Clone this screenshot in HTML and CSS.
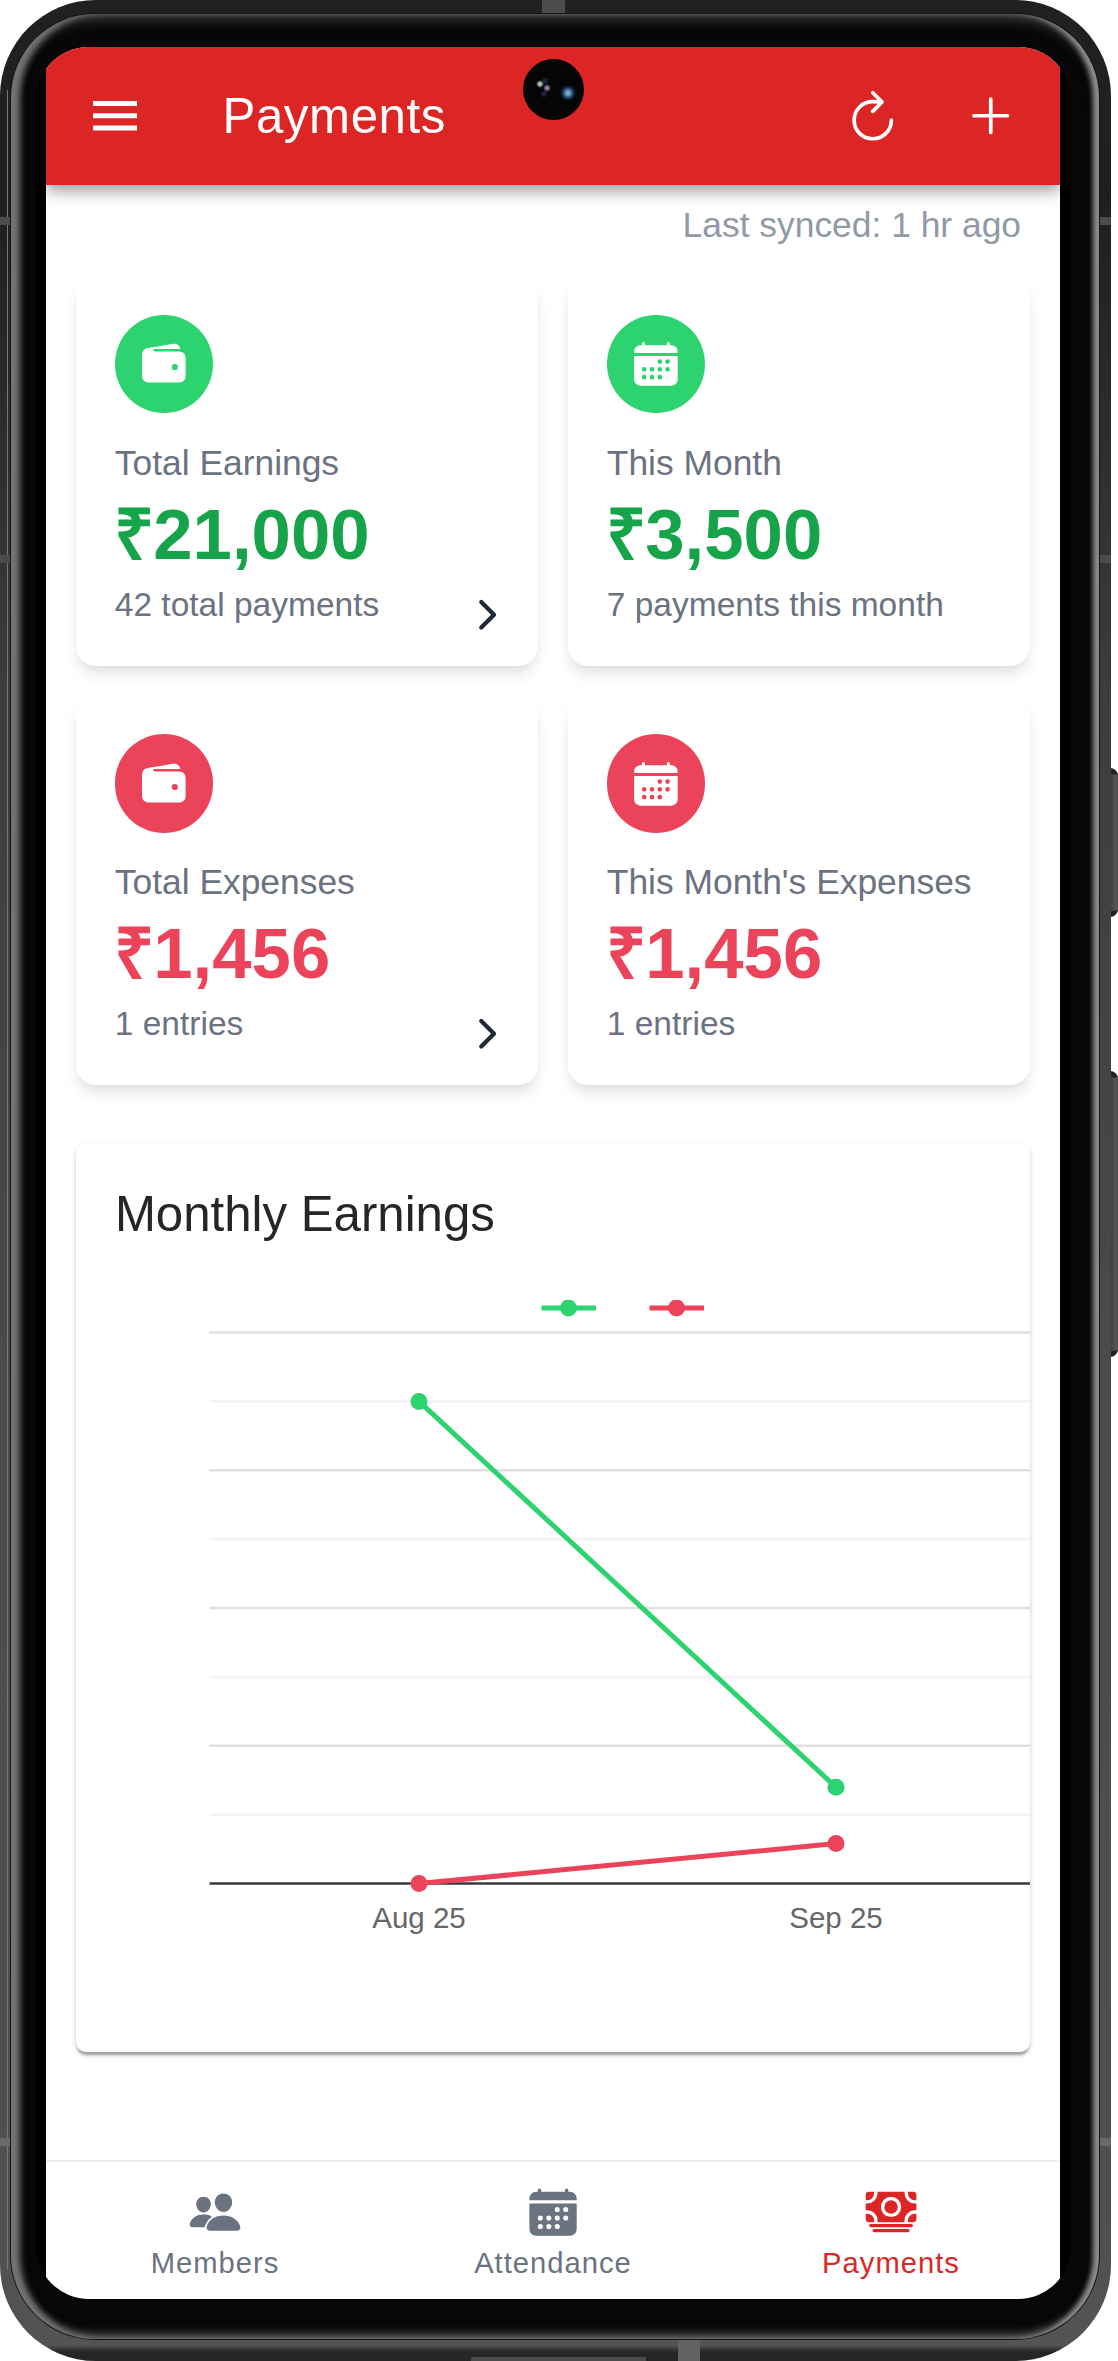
FILE: index.html
```html
<!DOCTYPE html>
<html lang="en">
<head>
<meta charset="utf-8">
<title>Payments</title>
<link rel="stylesheet" href="styles.css">
</head>
<body>
<svg class="sprite" aria-hidden="true">
  <symbol id="wallet" viewBox="0 0 512 512">
    <path d="M95.5 104h320a87.73 87.73 0 0111.18.71 66 66 0 00-77.51-55.56L86 94.08h-.3a66 66 0 00-41.07 26.13A87.57 87.57 0 0195.5 104zM415.5 128h-320a64.07 64.07 0 00-64 64v192a64.07 64.07 0 0064 64h320a64.07 64.07 0 0064-64V192a64.07 64.07 0 00-64-64zM368 320a32 32 0 1132-32 32 32 0 01-32 32z"/>
    <path d="M32 259.5V160c0-21.67 12-58 53.65-65.87C121 87.5 156 87.5 156 87.5s23 16 4 16-18.5 24.5 0 24.5 0 23.5 0 23.5L85.5 236z"/>
  </symbol>
  <symbol id="calendar" viewBox="0 0 512 512">
    <path d="M480 128a64 64 0 00-64-64h-16V48.45c0-8.61-6.62-16-15.23-16.43A16 16 0 00368 48v16H144V48.45c0-8.61-6.62-16-15.23-16.43A16 16 0 00112 48v16H96a64 64 0 00-64 64v12a4 4 0 004 4h440a4 4 0 004-4zM32 416a64 64 0 0064 64h320a64 64 0 0064-64V179a3 3 0 00-3-3H35a3 3 0 00-3 3zm344-208a24 24 0 11-24 24 24 24 0 0124-24zm0 80a24 24 0 11-24 24 24 24 0 0124-24zm-80-80a24 24 0 11-24 24 24 24 0 0124-24zm0 80a24 24 0 11-24 24 24 24 0 0124-24zm0 80a24 24 0 11-24 24 24 24 0 0124-24zm-80-80a24 24 0 11-24 24 24 24 0 0124-24zm0 80a24 24 0 11-24 24 24 24 0 0124-24zm-80-80a24 24 0 11-24 24 24 24 0 0124-24zm0 80a24 24 0 11-24 24 24 24 0 0124-24z"/>
  </symbol>
  <symbol id="people" viewBox="0 0 512 512">
    <path d="M336 256c-20.56 0-40.44-9.18-56-25.84-15.13-16.25-24.37-37.92-26-61-1.74-24.62 5.77-47.26 21.14-63.76S312 80 336 80c23.83 0 45.38 9.06 60.7 25.52 15.47 16.62 23 39.22 21.26 63.63-1.67 23.11-10.9 44.77-26 61C376.44 246.82 356.57 256 336 256zM467.83 432H204.18a27.71 27.71 0 01-22-10.67 30.22 30.22 0 01-5.26-25.79c8.42-33.81 29.28-61.85 60.32-81.08C264.79 297.4 299.86 288 336 288c36.85 0 71 9 98.71 26.05 31.11 19.13 52 47.33 60.38 81.55a30.27 30.27 0 01-5.32 25.78A27.68 27.68 0 01467.83 432zM147 260c-35.19 0-66.13-32.72-69-72.93-1.42-20.6 5-39.65 18-53.62 12.86-13.83 31-21.45 51-21.45s38 7.66 50.93 21.57c13.1 14.08 19.5 33.09 18 53.52-2.87 40.2-33.8 72.91-68.93 72.91zM212.66 291.45c-17.59-8.6-40.42-12.9-65.65-12.9-29.46 0-58.07 7.68-80.57 21.62-25.51 15.83-42.67 38.88-49.6 66.71a27.39 27.39 0 004.79 23.36A25.32 25.32 0 0041.72 400h111a8 8 0 007.87-6.57c.11-.63.25-1.26.41-1.88 8.48-34.06 28.35-62.84 57.71-83.82a8 8 0 00-.63-13.39c-1.57-.92-3.37-1.89-5.42-2.89z"/>
  </symbol>
  <symbol id="cash" viewBox="0 0 512 512">
    <path d="M448 400H64a16 16 0 010-32h384a16 16 0 010 32zM416 448H96a16 16 0 010-32h320a16 16 0 010 32zM32 272H16v48a32 32 0 0032 32h48v-16a64.07 64.07 0 00-64-64z"/>
    <path d="M480 240h16v-64h-16a96.11 96.11 0 01-96-96V64H128v16a96.11 96.11 0 01-96 96H16v64h16a96.11 96.11 0 0196 96v16h256v-16a96.11 96.11 0 0196-96zM256 304a96 96 0 1196-96 96.11 96.11 0 01-96 96z"/>
    <circle cx="256" cy="208" r="64"/>
    <path d="M416 336v16h48a32 32 0 0032-32v-48h-16a64.07 64.07 0 00-64 64zM480 144h16V96a32 32 0 00-32-32h-48v16a64.07 64.07 0 0064 64zM96 80V64H48a32 32 0 00-32 32v48h16a64.07 64.07 0 0064-64z"/>
  </symbol>
  <symbol id="chevron" viewBox="0 0 512 512">
    <path fill="none" stroke="currentColor" stroke-linecap="round" stroke-linejoin="round" stroke-width="48" d="M184 112l144 144-144 144"/>
  </symbol>
</svg>

<div class="phone">
  <span class="side-button power"></span>
  <span class="side-button volume"></span>
  <div class="body">
    <span class="antenna antenna-top"></span>
    <span class="antenna antenna-bottom"></span>
    <span class="port"></span>
    <span class="antenna side left a1"></span>
    <span class="antenna side left a2"></span>
    <span class="antenna side left a3"></span>
    <span class="antenna side right a1"></span>
    <span class="antenna side right a2"></span>
    <span class="antenna side right a3"></span>
    <div class="bezel">
      <div class="screen">
        <main class="app">
          <header class="toolbar">
            <svg class="menu" viewBox="0 0 18 12"><path fill="currentColor" d="M0 0h18v2H0zM0 5h18v2H0zM0 10h18v2H0z"/></svg>
            <h1 class="title">Payments</h1>
            <div class="actions">
              <svg class="action" viewBox="0 0 512 512"><path d="M320 146s24.360-12-64-12a160 160 0 10160 160M256 58l80 80-80 80"/></svg>
              <svg class="action" viewBox="0 0 512 512"><path d="M256 112v288M400 256H112"/></svg>
            </div>
          </header>

          <div class="content">
            <p class="synced">Last synced: 1 hr ago</p>

            <section class="stats">
              <article class="card">
                <span class="badge green"><svg><use href="#wallet"/></svg></span>
                <p class="label">Total Earnings</p>
                <p class="amount earned"><span class="currency">₹</span>21,000</p>
                <div class="foot"><p class="sub">42 total payments</p><svg class="chevron"><use href="#chevron"/></svg></div>
              </article>
              <article class="card">
                <span class="badge green"><svg><use href="#calendar"/></svg></span>
                <p class="label">This Month</p>
                <p class="amount earned"><span class="currency">₹</span>3,500</p>
                <div class="foot"><p class="sub">7 payments this month</p></div>
              </article>
              <article class="card">
                <span class="badge red"><svg><use href="#wallet"/></svg></span>
                <p class="label">Total Expenses</p>
                <p class="amount spent"><span class="currency">₹</span>1,456</p>
                <div class="foot"><p class="sub">1 entries</p><svg class="chevron"><use href="#chevron"/></svg></div>
              </article>
              <article class="card">
                <span class="badge red"><svg><use href="#calendar"/></svg></span>
                <p class="label">This Month's Expenses</p>
                <p class="amount spent"><span class="currency">₹</span>1,456</p>
                <div class="foot"><p class="sub">1 entries</p></div>
              </article>
            </section>

            <section class="chart-card">
              <h2 class="chart-title">Monthly Earnings</h2>
              <svg class="chart" viewBox="0 0 954.500 750">
                <g class="major">
                  <path d="M133.500 32.500H955M133.500 170.300H955M133.500 308H955M133.500 445.800H955"/>
                </g>
                <g class="minor">
                  <path d="M133.500 101.400H955M133.500 239.200H955M133.500 376.900H955M133.500 514.700H955"/>
                </g>
                <path class="axis" d="M133.500 583.600H955"/>
                <g class="series green-series">
                  <path d="M465.500 8h54.500M343 101.400L760 487.200"/>
                  <circle cx="492.500" cy="8" r="8.500"/><circle cx="343" cy="101.400" r="8.500"/><circle cx="760" cy="487.200" r="8.500"/>
                </g>
                <g class="series red-series">
                  <path d="M573.500 8h54.500M343 583.600L760 543.600"/>
                  <circle cx="600.500" cy="8" r="8.500"/><circle cx="343" cy="583.600" r="8.500"/><circle cx="760" cy="543.600" r="8.500"/>
                </g>
                <text x="343" y="627.500">Aug 25</text>
                <text x="760" y="627.500">Sep 25</text>
              </svg>
            </section>
          </div>

          <nav class="tabs">
            <a class="tab"><svg><use href="#people"/></svg><span>Members</span></a>
            <a class="tab"><svg><use href="#calendar"/></svg><span>Attendance</span></a>
            <a class="tab active"><svg><use href="#cash"/></svg><span>Payments</span></a>
          </nav>
        </main>
      </div>
      <span class="camera"></span>
    </div>
  </div>
</div>
</body>
</html>
```
FILE: styles.css
```css
* { box-sizing: border-box; margin: 0; padding: 0; }

body {
  background: #fff;
  font-family: "Liberation Sans", Arial, sans-serif;
  overflow: hidden;
}

.sprite { display: none; }
svg { display: block; fill: currentColor; }

/* device shell */
.phone { position: relative; width: 1118px; height: 2361px; }

.body {
  position: relative;
  width: 1110.500px;
  height: 2361px;
  padding: 14px 12px 22px 11px;
  border-radius: 96px;
  overflow: hidden;
  background:
    linear-gradient(90deg, transparent 7px, #777 7px, #777 8px, transparent 8px) 0 90px / 100% 2180px no-repeat,
    linear-gradient(180deg, #222021 0, #1d2020 200px, #3c3e3d 700px, #4a4b4a 1400px, #505050 2240px, #545454 2345px, #262626 2352px);
}

.bezel {
  position: relative;
  width: 1088px;
  height: 2325px;
  padding: 33px 28px 40px 25px;
  border-radius: 84px;
  background: #070707;
  box-shadow:
    inset 11px 0 6px -2px #747474,
    inset -8px 0 5px -2px #8c8c8c,
    inset 0 8px 14px -4px #4c4c4c,
    inset 0 -8px 10px -4px #6c6c6c,
    0 0 0 1px #151515;
}

.screen {
  width: 1035px;
  height: 2252px;
  padding: 0 11px 0 10px;
  border-radius: 53px;
  overflow: hidden;
  background: #000;
}

.antenna { position: absolute; background: #4c4c4c; }
.antenna-top { left: 542px; top: 0; width: 23px; height: 14px; }
.antenna-bottom { left: 678px; bottom: 0; width: 22px; height: 21px; background: #626262; }
.antenna.side { width: 10px; height: 8px; }
.antenna.left { left: 0; }
.antenna.right { right: 0; width: 11px; }
.a1 { top: 217px; }
.a2 { top: 555px; }
.a3 { top: 2138px; background: #6a6a6a; }
.port { position: absolute; left: 471px; bottom: 0; width: 175px; height: 4px; background: #4c4c4c; }

.side-button {
  position: absolute;
  right: 0;
  width: 10px;
  border-radius: 0 8px 8px 0;
  background: linear-gradient(90deg, #434442 40%, #555553 75%, #4a4a48);
  border: solid #222;
  border-width: 6px 0;
}
.power { top: 768px; height: 149px; }
.volume { top: 1071px; height: 286px; }

.camera {
  position: absolute;
  left: 511.500px;
  top: 45px;
  width: 61px;
  height: 61px;
  border-radius: 50%;
  background:
    radial-gradient(circle at 45px 34px, #6da3c4 0 2px, #1d3a60 5px, transparent 8px),
    radial-gradient(circle at 17px 25px, #c0cfc8 0 1px, transparent 4px),
    radial-gradient(circle at 24px 29px, #9c91ad 0 1px, transparent 4px),
    radial-gradient(circle at 21px 35px, #14294f 0 1px, transparent 4px),
    radial-gradient(circle at 22px 22px, #14294f 0 1px, transparent 4px),
    #050505;
}

/* application */
.app {
  display: flex;
  flex-direction: column;
  width: 1014px;
  height: 2252px;
  background: #fff;
}

.toolbar {
  position: relative;
  display: flex;
  align-items: center;
  flex: none;
  height: 138px;
  padding: 0 40px 0 46.500px;
  background: #dc2626;
  color: #fff;
  box-shadow: 0 5px 10px -2.500px rgba(0,0,0,.2), 0 10px 12px rgba(0,0,0,.14), 0 2.500px 25px rgba(0,0,0,.12);
}
.menu { width: 44.500px; height: 29.500px; }
.title {
  margin-left: 85.500px;
  font-size: 49.200px;
  font-weight: 400;
  line-height: 60px;
  letter-spacing: .6px;
}
.actions { display: flex; gap: 58.500px; margin-left: auto; }
.action {
  width: 59.500px;
  height: 59.500px;
  fill: none;
  stroke: currentColor;
  stroke-width: 32;
  stroke-linecap: round;
  stroke-linejoin: round;
}

.content { flex: 1; padding: 0 30px 0 29.500px; }

.synced {
  height: 90.500px;
  padding: 15px 9px 0 0;
  text-align: right;
  font-size: 35.400px;
  line-height: 50px;
  color: #9299a6;
}

.stats {
  display: grid;
  grid-template-columns: 1fr 1fr;
  grid-auto-rows: 390px;
  gap: 29.500px;
}
.card {
  padding: 39.300px;
  border-radius: 20px;
  background: #fff;
  box-shadow: 0 10px 15px -2.500px rgba(0,0,0,.1), 0 5px 10px -5px rgba(0,0,0,.08);
}
.badge {
  display: grid;
  place-items: center;
  width: 98.400px;
  height: 98.400px;
  border-radius: 50%;
  color: #fff;
}
.badge svg { width: 49.800px; height: 49.800px; }
.badge.green { background: #2dd36f; }
.badge.red { background: #eb445a; }
.label {
  margin-top: 24.500px;
  font-size: 35.400px;
  line-height: 50px;
  color: #6b7280;
  white-space: nowrap;
}
.amount { font-size: 70.700px; font-weight: 700; line-height: 94px; }
.currency { margin: 0 -.5px 0 -1px; }
.earned { color: #16a34a; }
.spent { color: #eb445a; }
.foot { display: flex; justify-content: space-between; height: 46px; }
.sub { font-size: 33.500px; line-height: 46px; color: #6b7280; white-space: nowrap; }
.chevron { width: 45.300px; height: 45.300px; margin: 10px -11.500px 0 0; color: #1f2937; }

.chart-card {
  height: 907.500px;
  margin-top: 59px;
  border-radius: 10px;
  overflow: hidden;
  background: #fff;
  box-shadow: 0 5px 2.500px -2.500px rgba(0,0,0,.2), 0 2.500px 2.500px rgba(0,0,0,.14), 0 2.500px 7.400px rgba(0,0,0,.12);
}
.chart-title {
  padding: 39px 39.400px 0;
  font-size: 49.200px;
  font-weight: 400;
  line-height: 62px;
  color: #262626;
}
.chart { width: 954.500px; height: 750px; margin-top: 55px; }
.major, .minor, .axis, .series path { fill: none; }
.major { stroke: #e0e0e0; stroke-width: 2.500; }
.minor { stroke: #f3f3f3; stroke-width: 2.500; }
.axis { stroke: #3a3a3c; stroke-width: 2.500; }
.series path { stroke: currentColor; stroke-width: 5; }
.green-series { color: #2dd36f; }
.red-series { color: #eb445a; }
.chart text { font-size: 29.500px; fill: #666; text-anchor: middle; }

.tabs {
  display: grid;
  grid-template-columns: repeat(3, 1fr);
  flex: none;
  height: 139.500px;
  border-top: 2.500px solid #efefef;
  color: #6b7280;
}
.tab { display: flex; flex-direction: column; align-items: center; padding-top: 23px; }
.tab svg { width: 54.100px; height: 54.100px; }
.tab span { margin-top: 4px; font-size: 29.200px; line-height: 40px; letter-spacing: 1px; }
.tab.active { color: #dc2626; }
```
